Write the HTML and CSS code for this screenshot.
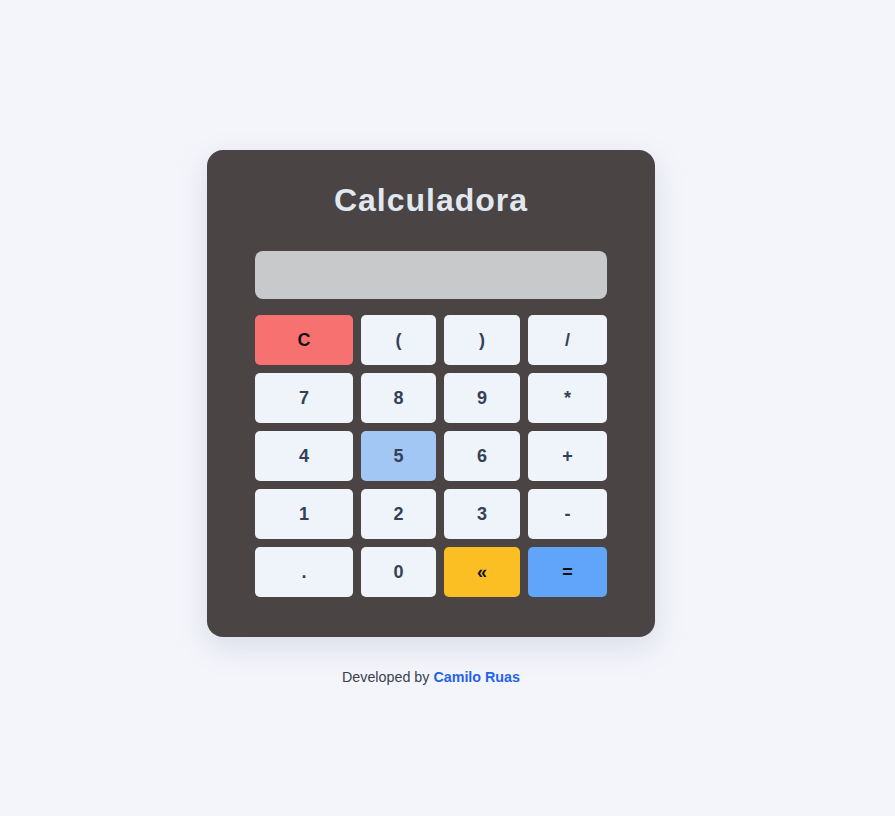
FILE: index.html
```html
<!DOCTYPE html>
<html lang="es">
<head>
<meta charset="utf-8">
<title>Calculadora</title>
<link rel="stylesheet" href="styles.css">
</head>
<body>
<main class="calc">
  <h1 class="title">Calculadora</h1>
  <div class="display"></div>
  <div class="keys">
    <button class="key key-clear">C</button>
    <button class="key">(</button>
    <button class="key">)</button>
    <button class="key">/</button>
    <button class="key">7</button>
    <button class="key">8</button>
    <button class="key">9</button>
    <button class="key">*</button>
    <button class="key">4</button>
    <button class="key key-active">5</button>
    <button class="key">6</button>
    <button class="key">+</button>
    <button class="key">1</button>
    <button class="key">2</button>
    <button class="key">3</button>
    <button class="key">-</button>
    <button class="key">.</button>
    <button class="key">0</button>
    <button class="key key-back">«</button>
    <button class="key key-equals">=</button>
  </div>
</main>
<footer class="footer">Developed by <a class="footer-link" href="#">Camilo Ruas</a></footer>
</body>
</html>
```
FILE: styles.css
```css
html, body {
  margin: 0;
  padding: 0;
}
body {
  background: #f4f5fa;
  font-family: "Liberation Sans", Arial, sans-serif;
  display: flex;
  flex-direction: column;
  align-items: center;
  padding: 150px 33px 0 0;
  min-height: 816px;
  box-sizing: border-box;
}
.calc {
  width: 448px;
  box-sizing: border-box;
  background: #4a4444;
  border-radius: 16px;
  padding: 32px 48px 40px;
  box-shadow: 0 10px 30px rgba(100, 110, 160, 0.18);
}
.title {
  margin: 0 0 32px;
  text-align: center;
  color: #e2e8f0;
  font-size: 32px;
  font-weight: 700;
  letter-spacing: 1px;
  line-height: 37px;
}
.display {
  height: 48px;
  background: #c8c9ca;
  border-radius: 8px;
  margin-bottom: 16px;
}
.keys {
  display: grid;
  grid-template-columns: 98px 75px 76px 79px;
  grid-auto-rows: 50px;
  gap: 8px;
}
.key {
  border: none;
  border-radius: 5px;
  background: #eff3fa;
  color: #334155;
  font-family: "Liberation Sans", Arial, sans-serif;
  font-size: 18px;
  font-weight: 700;
  padding: 0;
  cursor: pointer;
}
.key-clear {
  background: #f87171;
  color: #111111;
}
.key-active {
  background: #a3c7f5;
}
.key-back {
  background: #fbbf24;
  color: #111111;
}
.key-equals {
  background: #60a5fa;
  color: #111111;
}
.footer {
  margin-top: 32px;
  font-size: 14.3px;
  line-height: 16px;
  color: #374151;
}
.footer-link {
  color: #2563eb;
  font-weight: 700;
  text-decoration: none;
}
```
